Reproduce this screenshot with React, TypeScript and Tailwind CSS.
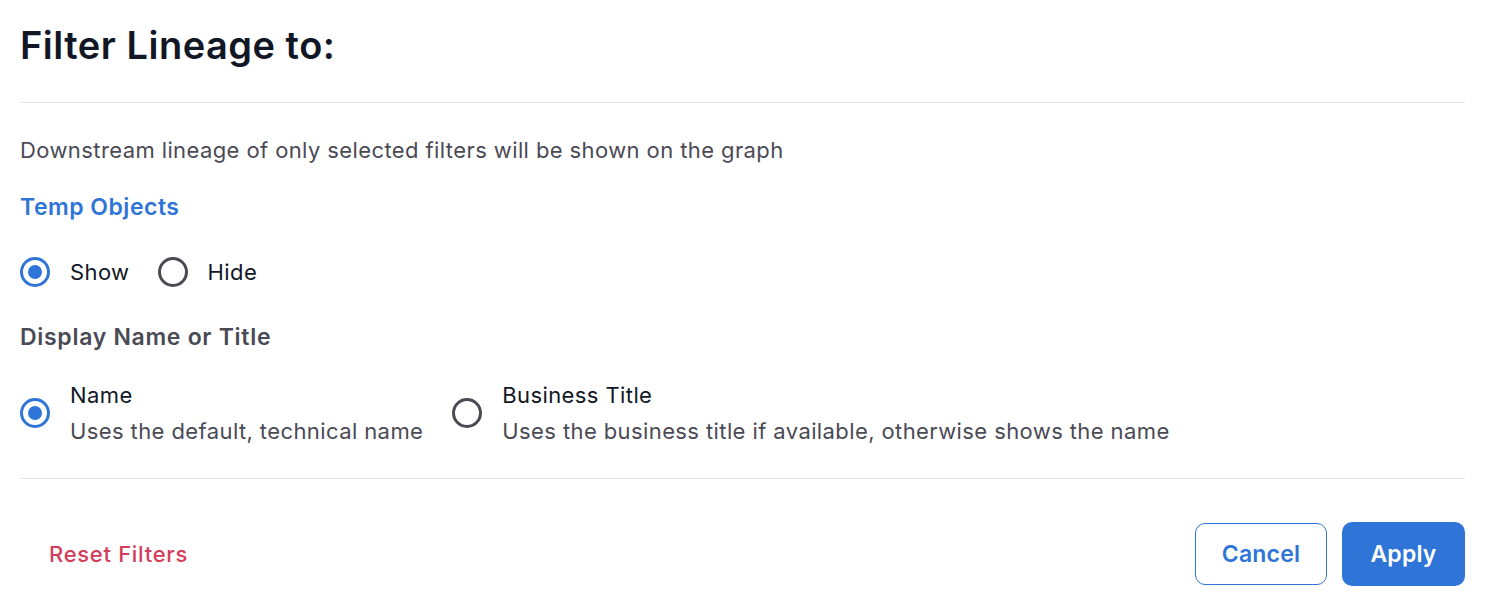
import React from "react";

function Radio({ checked }: { checked: boolean }) {
  return checked ? (
    <span className="flex h-[30px] w-[30px] shrink-0 items-center justify-center rounded-full border-[3px] border-[#2f75d7]">
      <span className="h-[14px] w-[14px] rounded-full bg-[#2f75d7]" />
    </span>
  ) : (
    <span className="h-[30px] w-[30px] shrink-0 rounded-full border-[3px] border-[#4a4a52]" />
  );
}

export default function App() {
  return (
    <div
      className="flex h-[612px] w-full flex-col bg-white pl-5 pr-[21px]"
      style={{ fontFamily: "Inter, 'Noto Sans', sans-serif" }}
    >
      <div className="border-b border-[#e6e7ec] pt-[21px] pb-[33px]">
        <h1 className="text-[38px] font-semibold leading-[48px] tracking-[0.5px] text-[#121726]">
          Filter Lineage to:
        </h1>
      </div>

      <p className="mt-[33px] text-[22px] leading-[28px] tracking-[0.4px] text-[#4a4a55]">
        Downstream lineage of only selected filters will be shown on the graph
      </p>

      <h2 className="mt-[29px] text-[23px] font-semibold leading-[28px] tracking-[0.5px] text-[#2f75d7]">
        Temp Objects
      </h2>

      <div className="mt-[36px] flex items-center">
        <label className="flex items-center gap-5">
          <Radio checked />
          <span className="text-[22px] leading-[30px] tracking-[0.4px] text-[#121726]">Show</span>
        </label>
        <label className="ml-[28px] flex items-center gap-5">
          <Radio checked={false} />
          <span className="text-[22px] leading-[30px] tracking-[0.4px] text-[#121726]">Hide</span>
        </label>
      </div>

      <h3 className="mt-[36px] text-[23px] font-semibold leading-[28px] tracking-[0.7px] text-[#4a4a55]">
        Display Name or Title
      </h3>

      <div className="mt-[30px] flex items-center border-b border-[#e6e7ec] pb-[33px]">
        <label className="flex items-center gap-5">
          <Radio checked />
          <span className="flex flex-col">
            <span className="text-[22px] leading-[28px] tracking-[0.4px] text-[#121726]">Name</span>
            <span className="mt-[8px] text-[22px] leading-[28px] tracking-[0.4px] text-[#4a4a55]">
              Uses the default, technical name
            </span>
          </span>
        </label>
        <label className="ml-[29px] flex items-center gap-5">
          <Radio checked={false} />
          <span className="flex flex-col">
            <span className="text-[22px] leading-[28px] tracking-[0.4px] text-[#121726]">Business Title</span>
            <span className="mt-[8px] text-[22px] leading-[28px] tracking-[0.4px] text-[#4a4a55]">
              Uses the business title if available, otherwise shows the name
            </span>
          </span>
        </label>
      </div>

      <div className="mt-[43px] flex items-center justify-between">
        <button className="ml-[29px] text-[22px] font-medium leading-[28px] tracking-[0.7px] text-[#d43d5a]">
          Reset Filters
        </button>
        <div className="flex items-center gap-[15px]">
          <button className="h-[62px] w-[132px] rounded-[10px] border border-[#2f75d7] bg-white text-[23px] font-semibold tracking-[0.2px] text-[#2f75d7]">
            Cancel
          </button>
          <button className="h-[64px] w-[123px] rounded-[10px] bg-[#2f75d7] text-[23px] font-semibold tracking-[0.2px] text-white">
            Apply
          </button>
        </div>
      </div>
    </div>
  );
}
